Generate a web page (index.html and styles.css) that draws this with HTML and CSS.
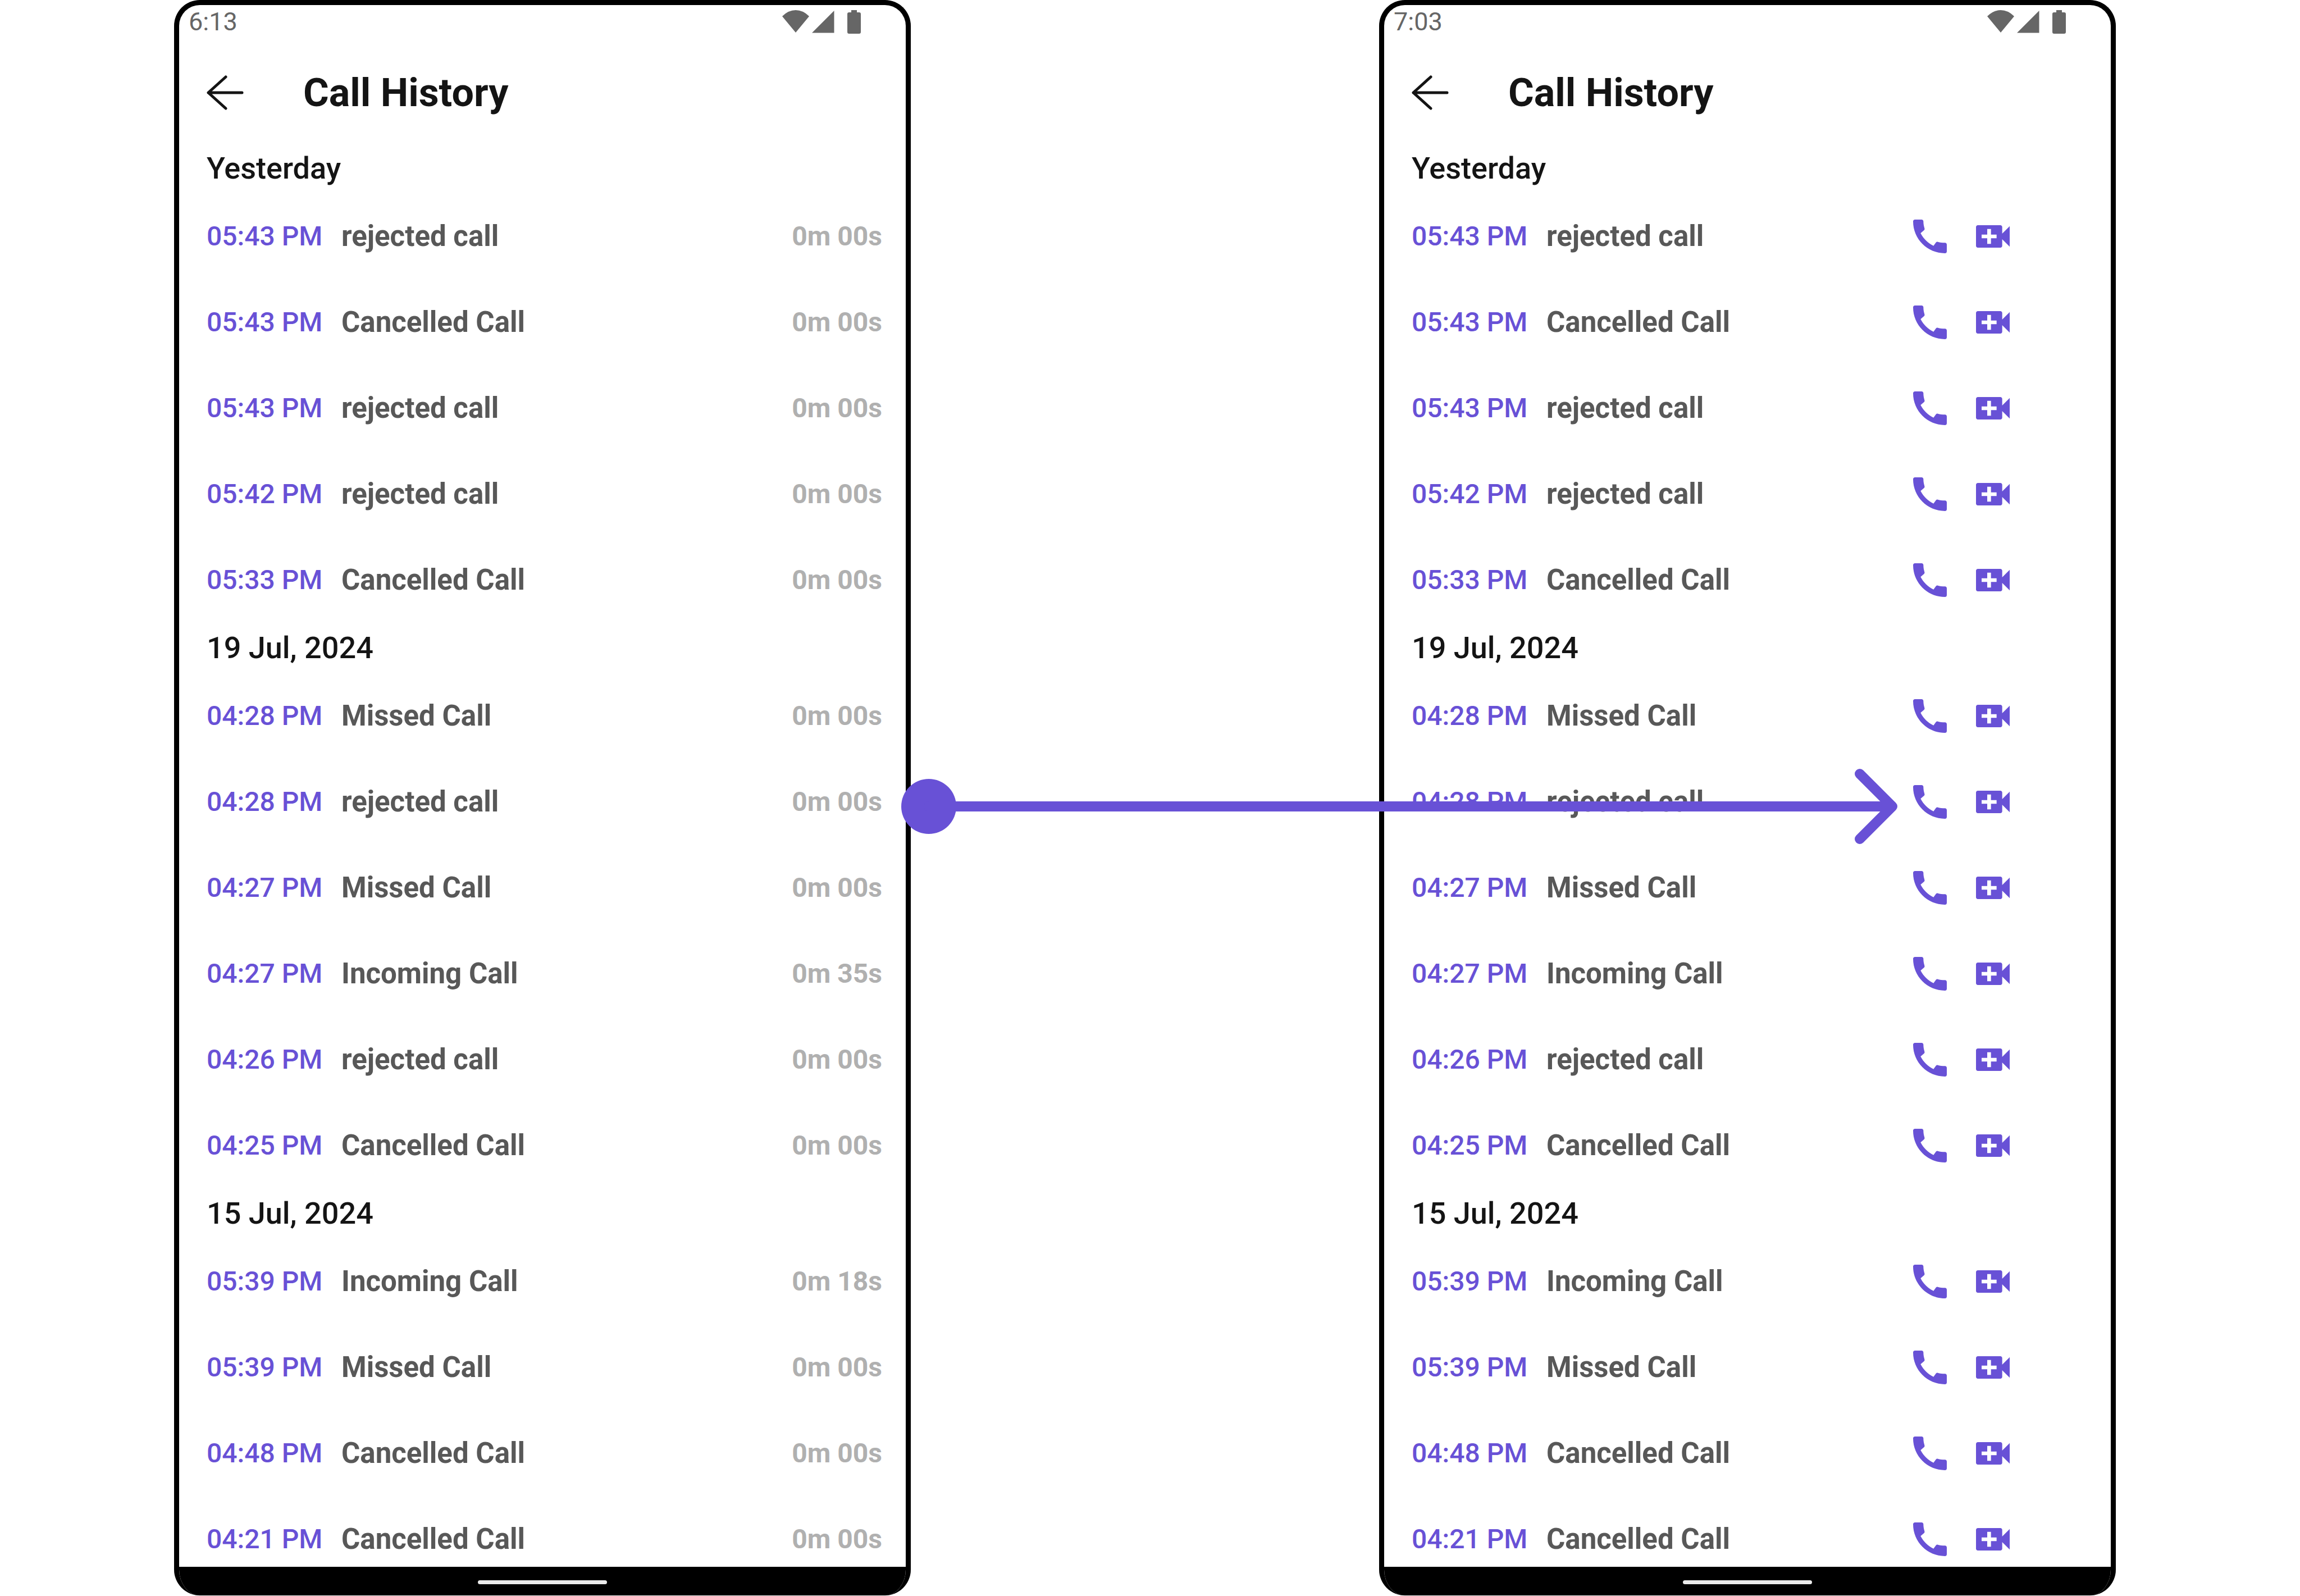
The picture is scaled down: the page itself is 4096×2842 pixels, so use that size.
FILE: index.html
```html
<!DOCTYPE html>
<html lang="en">
<head>
<meta charset="utf-8">
<title>Call History</title>
<link rel="stylesheet" href="styles.css">
</head>
<body>
<svg class="sprite" aria-hidden="true">
  <symbol id="back" viewBox="0 0 66 62"><path d="M34 3 3 31l31 28M3 31h60" fill="none" stroke="currentColor" stroke-width="5" stroke-linecap="round" stroke-linejoin="round"/></symbol>
  <symbol id="status" viewBox="0 0 140 42"><path fill="currentColor" d="M0 11Q11 0 24 0T48 11L24 40ZM53 40.500 92.500 1V40.500ZM123 0h10v4h4q3 0 3 3v32q0 3-3 3h-18q-3 0-3-3V7q0-3 3-3h4Z"/></symbol>
  <symbol id="phone" viewBox="0 0 24 24"><path fill="currentColor" d="M7 10.300C8.500 13.200 10.900 15.600 13.900 17L15.200 15.200C15.500 14.900 15.800 14.800 16.200 14.900C17.300 15.200 18.600 15.400 20 15.400C20.600 15.400 21 15.800 21 16.400V20C21 20.600 20.600 21 20 21C10.600 21 3 13.400 3 4C3 3.400 3.400 3 4 3H7.500C8.100 3 8.500 3.400 8.500 4C8.500 5.300 8.700 6.500 9.100 7.700C9.200 8 9.100 8.400 8.900 8.600Z"/></symbol>
  <symbol id="video" viewBox="0 0 24 24"><path fill="currentColor" d="M17 10.500V7c0-.55-.45-1-1-1H4c-.55 0-1 .45-1 1v10c0 .55.45 1 1 1h12c.55 0 1-.45 1-1v-3.500l4 4v-11l-4 4zM14 13h-3v3H9v-3H6v-2h3V8h2v3h3v2z"/></symbol>
</svg>
<main class="stage" id="stage"></main>
<script src="app.js"></script>
</body>
</html>
```
FILE: styles.css
```css
* { box-sizing: border-box; }
html, body { margin: 0; height: 100%; overflow: hidden; }
body { background: #fff; color: #141414; font-family: Roboto, "Liberation Sans", sans-serif; }
.sprite { position: absolute; width: 0; height: 0; }
.stage { position: relative; display: grid; grid-template-columns: 1fr 1fr; gap: 834px; height: 100%; padding: 0 328px 1px 310px; }
.phone { display: flex; flex-direction: column; min-width: 0; min-height: 0; background: #fff; border: 9px solid #000; border-bottom: 0; border-radius: 46px; overflow: hidden; }
.status { display: flex; flex: none; justify-content: space-between; align-items: center; height: 60px; padding: 0 80px 0 17px; font-size: 45px; line-height: 60px; color: #666; }
.status-icons { width: 140px; height: 42px; }
.appbar { display: flex; flex: none; align-items: center; gap: 106px; height: 186px; padding: 5px 49px 0; }
.back { display: flex; padding: 0; border: 0; background: none; color: #141414; }
.back svg { width: 66px; height: 62px; }
.title { margin: 0; font-size: 70px; line-height: 80px; font-weight: 700; }
.list { flex: 1; min-height: 0; overflow: hidden; }
.day { margin: 0; padding: 0 49px; font-size: 54px; line-height: 89px; font-weight: 500; }
.calls { margin: 0; padding: 0; list-style: none; }
.call { display: flex; align-items: center; height: 153px; padding: 0 42px 0 49px; }
.time { width: 240px; font-size: 48px; font-weight: 500; color: #6851d6; white-space: nowrap; }
.kind { flex: 1; font-size: 51px; font-weight: 700; color: #585858; }
.length { font-size: 48px; font-weight: 700; color: #b0b0b0; }
.actions { display: flex; gap: 32px; padding-right: 128px; }
.action { display: flex; padding: 0; border: 0; background: none; color: #6851d6; }
.action svg { width: 80px; height: 80px; }
.navbar { display: flex; flex: none; justify-content: center; align-items: center; height: 51px; padding-top: 4px; background: #000; }
.home { width: 230px; height: 7px; border-radius: 4px; background: #ebebeb; }
.pointer { position: absolute; left: 1605px; top: 1367px; width: 1776px; height: 138px; }
```
FILE: app.js
```js
const days = [
  ["Yesterday", [["05:43 PM", "rejected call", "0m 00s"], ["05:43 PM", "Cancelled Call", "0m 00s"], ["05:43 PM", "rejected call", "0m 00s"], ["05:42 PM", "rejected call", "0m 00s"], ["05:33 PM", "Cancelled Call", "0m 00s"]]],
  ["19 Jul, 2024", [["04:28 PM", "Missed Call", "0m 00s"], ["04:28 PM", "rejected call", "0m 00s"], ["04:27 PM", "Missed Call", "0m 00s"], ["04:27 PM", "Incoming Call", "0m 35s"], ["04:26 PM", "rejected call", "0m 00s"], ["04:25 PM", "Cancelled Call", "0m 00s"]]],
  ["15 Jul, 2024", [["05:39 PM", "Incoming Call", "0m 18s"], ["05:39 PM", "Missed Call", "0m 00s"], ["04:48 PM", "Cancelled Call", "0m 00s"], ["04:21 PM", "Cancelled Call", "0m 00s"]]]
];

const icon = (id, cls = "") => `<svg class="${cls}" aria-hidden="true"><use href="#${id}"/></svg>`;
const actions = `<span class="actions"><button class="action" type="button" aria-label="Voice call">${icon("phone")}</button><button class="action" type="button" aria-label="Video call">${icon("video")}</button></span>`;

const phone = (clock, withActions) => `
<section class="phone">
  <div class="status"><span>${clock}</span>${icon("status", "status-icons")}</div>
  <header class="appbar"><button class="back" type="button" aria-label="Back">${icon("back")}</button><h1 class="title">Call History</h1></header>
  <div class="list">${days.map(([day, calls]) => `
    <h2 class="day">${day}</h2>
    <ul class="calls">${calls.map(([time, kind, length]) => `
      <li class="call"><span class="time">${time}</span><span class="kind">${kind}</span>${withActions ? actions : `<span class="length">${length}</span>`}</li>`).join("")}
    </ul>`).join("")}
  </div>
  <div class="navbar"><span class="home"></span></div>
</section>`;

// The pointer leads from the plain list to the list with call buttons.
document.getElementById("stage").innerHTML = phone("6:13", false) + phone("7:03", true) + `
<svg class="pointer" viewBox="0 0 1776 138" aria-hidden="true">
  <circle cx="49" cy="69" r="49" fill="#6851d6"/>
  <path d="M49 69H1765M1707 11l58 58-58 58" fill="none" stroke="#6851d6" stroke-width="18" stroke-linecap="round" stroke-linejoin="round"/>
</svg>`;
```
